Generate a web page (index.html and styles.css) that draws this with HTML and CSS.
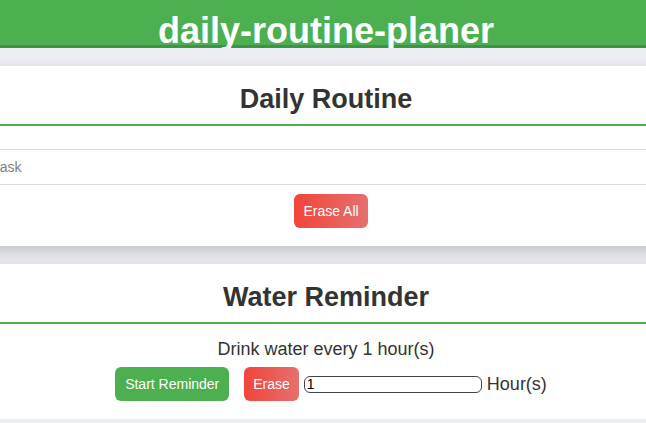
FILE: index.html
```html
<!DOCTYPE html>
<html lang="en">
<head>
<meta charset="utf-8">
<title>daily-routine-planer</title>
<link rel="stylesheet" href="styles.css">
</head>
<body>
<div class="page">
  <header class="top">
    <h1>daily-routine-planer</h1>
  </header>
  <main class="content">
    <section class="card">
      <div class="card-head"><h2>Daily Routine</h2></div>
      <div class="task-row">
        <input class="task-input" type="text" placeholder="Add task">
      </div>
      <div class="actions">
        <button class="btn btn-danger btn-erase-all">Erase All</button>
      </div>
    </section>
    <section class="card">
      <div class="card-head"><h2>Water Reminder</h2></div>
      <p class="water-text">Drink water every 1 hour(s)</p>
      <div class="water-row">
        <button class="btn btn-green">Start Reminder</button>
        <button class="btn btn-danger btn-erase">Erase</button>
        <input class="hours-input" type="text" value="1">
        <span class="hours-label">Hour(s)</span>
      </div>
    </section>
  </main>
</div>
</body>
</html>
```
FILE: styles.css
```css
html, body {
  margin: 0;
  padding: 0;
  overflow: hidden;
}
body {
  background: #eceef2;
  font-family: "Liberation Sans", Arial, sans-serif;
  color: #333;
}
.page {
  width: 772px;
  margin-left: -60px;
}
.top {
  height: 48px;
  box-sizing: border-box;
  padding-top: 10px;
  background: #4caf50;
  box-shadow: inset 0 -3px 0 #3f9443;
  overflow: hidden;
  text-align: center;
}
.top h1 {
  margin: 0;
  font-size: 36px;
  line-height: 41px;
  font-weight: bold;
  color: #fff;
}
.content {
  display: flex;
  flex-direction: column;
  gap: 18px;
  padding-top: 18px;
}
.card {
  background: #fff;
  padding: 0 16px 18px;
  box-shadow: 0 6px 14px rgba(0, 0, 0, 0.18);
}
.card-head {
  padding: 17px 0 9px;
  margin: 0 -16px;
  border-bottom: 2px solid #4caf50;
  text-align: center;
}
.card-head h2 {
  margin: 0;
  font-size: 27px;
  line-height: 32px;
  font-weight: bold;
  color: #333;
}
.task-row {
  display: flex;
  margin-top: 23px;
}
.task-input {
  flex: 1;
  height: 36px;
  box-sizing: border-box;
  border: 1px solid #dcdcdc;
  padding: 0 10px;
  font-family: "Liberation Sans", Arial, sans-serif;
  font-size: 14px;
  color: #333;
  outline: none;
}
.task-input::placeholder {
  color: #808080;
}
.actions {
  display: flex;
  justify-content: center;
  margin-top: 9px;
  padding-left: 10px;
}
.btn {
  border: none;
  border-radius: 6px;
  color: #fff;
  font-family: "Liberation Sans", Arial, sans-serif;
  font-size: 14px;
  line-height: 16px;
  padding: 9px 9px;
  cursor: pointer;
}
.btn-danger {
  background: linear-gradient(90deg, #f2443a, #e5706f);
}
.btn-green {
  background: #4caf50;
  padding: 9px 10px;
}
.water-text {
  margin: 14px 0 0;
  text-align: center;
  font-size: 18px;
  line-height: 22px;
  color: #333;
}
.water-row {
  display: flex;
  justify-content: center;
  align-items: center;
  margin-top: 7px;
  padding-left: 10px;
}
.btn-erase {
  margin-left: 15px;
}
.hours-input {
  margin-left: 5px;
  width: 178px;
  height: 17px;
  box-sizing: border-box;
  border: 1px solid #444;
  border-radius: 6px;
  padding: 0 2px;
  font-family: "Liberation Sans", Arial, sans-serif;
  font-size: 14px;
  color: #000;
  outline: none;
}
.hours-label {
  margin-left: 5px;
  font-size: 18px;
  line-height: 22px;
  color: #333;
}
```
